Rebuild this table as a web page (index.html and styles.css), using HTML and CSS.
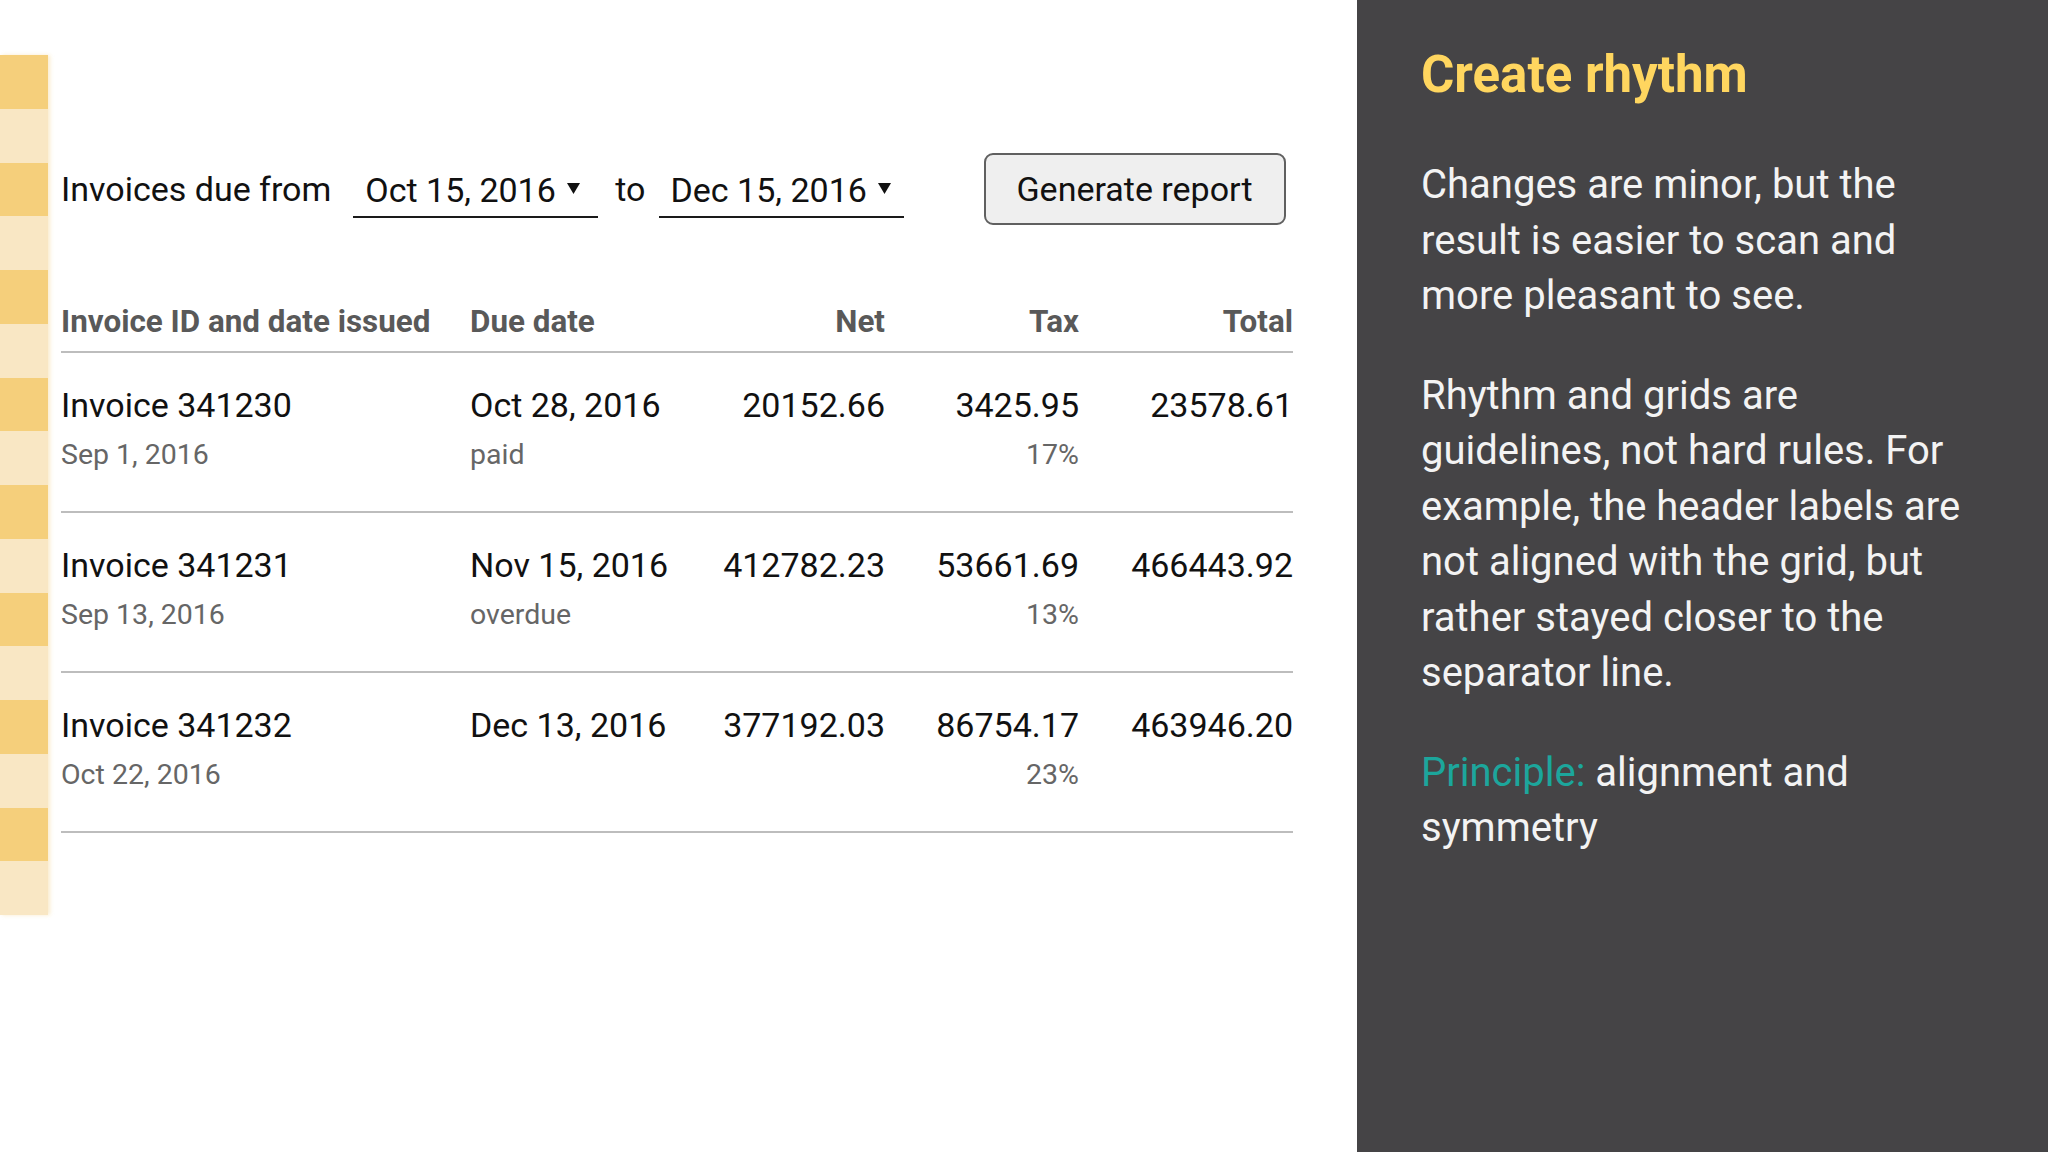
FILE: index.html
```html
<!DOCTYPE html>
<html lang="en">
<head>
<meta charset="utf-8">
<title>Create rhythm</title>
<link rel="stylesheet" href="styles.css">
</head>
<body>
<div class="page">
  <main class="canvas">
    <div class="stripes">
      <span class="stripe dark"></span><span class="stripe light"></span>
      <span class="stripe dark"></span><span class="stripe light"></span>
      <span class="stripe dark"></span><span class="stripe light"></span>
      <span class="stripe dark"></span><span class="stripe light"></span>
      <span class="stripe dark"></span><span class="stripe light"></span>
      <span class="stripe dark"></span><span class="stripe light"></span>
      <span class="stripe dark"></span><span class="stripe light"></span>
      <span class="stripe dark"></span><span class="stripe light"></span>
    </div>
    <div class="content">
      <div class="filters">
        <span class="label">Invoices due from</span>
        <div class="dropdown">
          <span>Oct 15, 2016</span>
          <svg class="caret" width="13" height="11" viewBox="0 0 13 11"><polygon points="0,0 13,0 6.5,11" fill="#111"/></svg>
        </div>
        <span class="label to">to</span>
        <div class="dropdown">
          <span>Dec 15, 2016</span>
          <svg class="caret" width="13" height="11" viewBox="0 0 13 11"><polygon points="0,0 13,0 6.5,11" fill="#111"/></svg>
        </div>
        <button class="btn">Generate report</button>
      </div>

      <div class="table">
        <div class="row head">
          <div class="cell">Invoice ID and date issued</div>
          <div class="cell">Due date</div>
          <div class="cell num">Net</div>
          <div class="cell num">Tax</div>
          <div class="cell num">Total</div>
        </div>
        <div class="row">
          <div class="cell"><div class="main">Invoice 341230</div><div class="sub">Sep 1, 2016</div></div>
          <div class="cell"><div class="main">Oct 28, 2016</div><div class="sub">paid</div></div>
          <div class="cell num"><div class="main">20152.66</div></div>
          <div class="cell num"><div class="main">3425.95</div><div class="sub">17%</div></div>
          <div class="cell num"><div class="main">23578.61</div></div>
        </div>
        <div class="row">
          <div class="cell"><div class="main">Invoice 341231</div><div class="sub">Sep 13, 2016</div></div>
          <div class="cell"><div class="main">Nov 15, 2016</div><div class="sub">overdue</div></div>
          <div class="cell num"><div class="main">412782.23</div></div>
          <div class="cell num"><div class="main">53661.69</div><div class="sub">13%</div></div>
          <div class="cell num"><div class="main">466443.92</div></div>
        </div>
        <div class="row">
          <div class="cell"><div class="main">Invoice 341232</div><div class="sub">Oct 22, 2016</div></div>
          <div class="cell"><div class="main">Dec 13, 2016</div></div>
          <div class="cell num"><div class="main">377192.03</div></div>
          <div class="cell num"><div class="main">86754.17</div><div class="sub">23%</div></div>
          <div class="cell num"><div class="main">463946.20</div></div>
        </div>
      </div>
    </div>
  </main>

  <aside class="panel">
    <h1 class="title">Create rhythm</h1>
    <p class="text">Changes are minor, but the result is easier to scan and more pleasant to see.</p>
    <p class="text">Rhythm and grids are guidelines, not hard rules. For example, the header labels are not aligned with the grid, but rather stayed closer to the separator line.</p>
    <p class="text"><span class="accent">Principle:</span> alignment and symmetry</p>
  </aside>
</div>
</body>
</html>
```

FILE: styles.css
```css
* { box-sizing: border-box; }

html, body {
  margin: 0;
  padding: 0;
}

body {
  font-family: Roboto, "Liberation Sans", sans-serif;
  color: #111;
  background: #ffffff;
}

.page {
  display: flex;
  width: 2048px;
  height: 1152px;
  overflow: hidden;
}

.canvas {
  flex: 1;
  display: flex;
  background: #ffffff;
}

/* left yellow rhythm stripes */
.stripes {
  width: 48px;
  margin-top: 55px;
  display: flex;
  flex-direction: column;
  align-self: flex-start;
  box-shadow: 2px 0 4px rgba(240, 200, 110, 0.35);
}

.stripe {
  display: block;
  height: 53.75px;
}

.stripe.dark { background: #f5cf7b; }
.stripe.light { background: #f9e7c4; }

.content {
  padding: 153px 0 0 13px;
  width: 1245px;
}

/* filter row */
.filters {
  display: flex;
  align-items: center;
  height: 72px;
}

.label {
  font-size: 34px;
  line-height: 40px;
  color: #111;
}

.filters > .label:first-child { margin-right: 22px; }

.to { margin: 0 13px 0 17px; }

.dropdown {
  width: 245px;
  display: flex;
  align-items: center;
  padding: 10px 12px 6px 12px;
  border-bottom: 2px solid #1a1a1a;
  font-size: 34px;
  line-height: 40px;
}

.caret {
  margin: 0 0 4px 11px;
  flex: none;
}

.btn {
  margin-left: 80px;
  width: 302px;
  height: 72px;
  border: 2px solid #606060;
  border-radius: 9px;
  background: #efefef;
  font-family: Roboto, "Liberation Sans", sans-serif;
  font-size: 34px;
  color: #111;
  padding: 0;
}

/* table */
.table {
  margin-top: 78px;
  width: 1232px;
}

.row {
  display: grid;
  grid-template-columns: 409px 240px 175px 194px 214px;
  border-bottom: 2px solid #bdbdbd;
  height: 160px;
  padding-top: 32px;
}

.row.head {
  height: auto;
  padding: 0 0 10px;
  font-weight: 700;
  font-size: 31.4px;
  line-height: 38px;
  color: #595959;
}

.cell.num { text-align: right; }

.main {
  font-size: 34px;
  line-height: 40px;
  color: #111;
}

.sub {
  margin-top: 11px;
  font-size: 28.5px;
  line-height: 37px;
  color: #666;
}

/* right panel */
.panel {
  width: 691px;
  flex: none;
  background: #454446;
  padding: 45px 60px 0 64px;
  color: #f3f3f3;
}

.title {
  margin: 0 0 52px;
  font-size: 51px;
  line-height: 60px;
  font-weight: 700;
  color: #ffd65f;
}

.text {
  margin: 0 0 44px;
  font-size: 40px;
  line-height: 55.5px;
  max-width: 560px;
}

.accent { color: #1ca69c; }
```
